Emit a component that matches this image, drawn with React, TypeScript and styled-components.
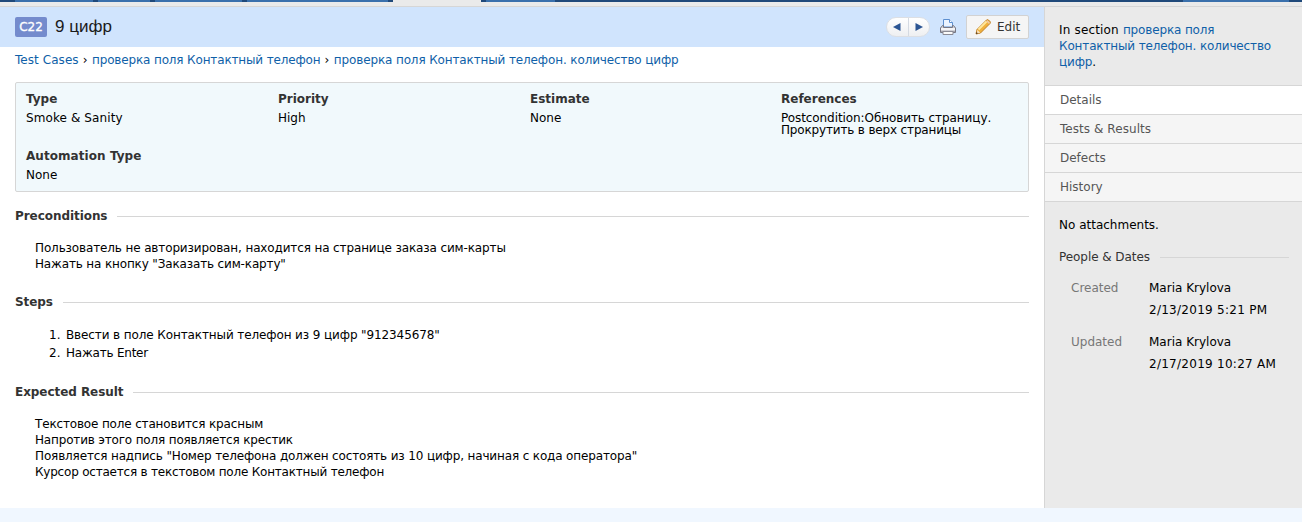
import React from "react";
import styled, { createGlobalStyle } from "styled-components";

const Global = createGlobalStyle`
  * { box-sizing: border-box; }
  body { margin: 0; background: #f0f7ff; color: #000; font: 12px/16px "DejaVu Sans", Verdana, sans-serif; }
  #root { display: flow-root; }
`;

const Page = styled.div`
  height: 522px;
  overflow: hidden;
`;
const TabStrip = styled.div`
  display: flex;
  height: 2px;
  background: #20497a;
`;
const TabEdge = styled.div<{ $w: number; $gap: number; $active?: boolean }>`
  width: ${(p) => p.$w}px;
  margin-left: ${(p) => p.$gap}px;
  background: ${(p) => (p.$active ? "#eaeaea" : "#3a70ac")};
`;
const Rule = styled.div`
  height: 5px;
  background: #eaeaea;
  border-bottom: 1px solid #d6d6d6;
`;
const Body = styled.div`
  display: flex;
  height: 501px;
`;
const Main = styled.main`
  width: 1044px;
  background: #fff;
`;
const Header = styled.header`
  display: flex;
  align-items: center;
  height: 40px;
  padding: 0 15px;
  background: #d0e4fd;
`;
const CaseId = styled.span`
  width: 32px;
  height: 20px;
  border-radius: 2px;
  background: #748bcd;
  color: #fff;
  font-size: 12px;
  line-height: 21px;
  text-align: center;
  -webkit-text-stroke: 0.3px #fff;
`;
const Title = styled.h1`
  flex: 1;
  margin: 0 0 0 8px;
  font: 17px/20px "Liberation Sans", Arial, sans-serif;
  color: #1a1a1a;
`;
const Pager = styled.div`
  display: flex;
  width: 44px;
  height: 20px;
  margin-right: 10px;
  border: 1px solid #dcdfe4;
  border-radius: 10px;
  background: linear-gradient(#fff, #eeeff1);
`;
const PagerButton = styled.span`
  display: flex;
  flex: 1;
  align-items: center;
  justify-content: center;
  & + & { border-left: 1px solid #d5dae2; }
`;
const EditButton = styled.button`
  display: flex;
  align-items: center;
  gap: 6px;
  width: 63px;
  height: 24px;
  margin-left: 10px;
  padding: 0 0 0 8px;
  border: 1px solid #d2d2d2;
  border-radius: 2px;
  background: #f5f5f5;
  color: #333;
  font: inherit;
`;
const Crumbs = styled.nav`
  height: 35px;
  padding: 5px 15px 0;
  white-space: pre;
`;
const Text = styled.span<{ $track?: number }>`
  letter-spacing: ${(p) => p.$track ?? 0}px;
`;
const Link = styled.a<{ $track?: number }>`
  color: #0f5fa8;
  letter-spacing: ${(p) => p.$track ?? 0}px;
`;
const Line = styled.div<{ $track?: number }>`
  white-space: nowrap;
  letter-spacing: ${(p) => p.$track ?? 0}px;
`;
const Content = styled.div`
  padding: 0 15px;
`;
const Fields = styled.section`
  display: grid;
  grid-template-columns: 252px 252px 251px 1fr;
  grid-template-rows: 57px auto;
  height: 110px;
  margin-bottom: 16px;
  padding: 8px 10px 0;
  border: 1px solid #d6d6d6;
  border-radius: 2px;
  background: #f1f9fc;
`;
const FieldName = styled.div`
  height: 20px;
  font-weight: bold;
  color: #333;
`;
const FieldValue = styled.div`
  padding-top: 1px;
  line-height: 12px;
`;
const Section = styled.section<{ $h: number }>`
  height: ${(p) => p.$h}px;
`;
const SectionTitle = styled.h2<{ $light?: boolean }>`
  display: flex;
  align-items: center;
  gap: 10px;
  margin: 0;
  font-size: 12px;
  line-height: 16px;
  font-weight: ${(p) => (p.$light ? "normal" : "bold")};
  letter-spacing: -0.06px;
  color: #333;
  white-space: nowrap;
  &::after { content: ""; flex: 1; margin-top: 1px; border-top: 1px solid #d6d6d6; }
`;
const TextBlock = styled.div`
  padding: 16px 20px 0;
`;
const Steps = styled.ol`
  margin: 0;
  padding: 16px 0 0 34px;
  line-height: 18px;
  list-style: none;
  counter-reset: step;
`;
const Step = styled.li<{ $track: number }>`
  display: flex;
  letter-spacing: ${(p) => p.$track}px;
  counter-increment: step;
  &::before { content: counter(step) "."; width: 17px; letter-spacing: 0; }
`;
const Aside = styled.aside`
  flex: 1;
  border-left: 1px solid #d6d6d6;
  background: #eaeaea;
`;
const SectionInfo = styled.p`
  height: 78px;
  margin: 0;
  padding: 15px 30px 0 14px;
`;
const SideTab = styled.div<{ $active?: boolean }>`
  height: 29px;
  padding: 6px 15px 0;
  border-top: 1px solid #d6d6d6;
  background: ${(p) => (p.$active ? "#fff" : "#f5f5f5")};
  color: #555;
`;
const SideBody = styled.div`
  padding: 15px 13px 0 14px;
  border-top: 1px solid #d6d6d6;
`;
const Attachments = styled.div`
  height: 32px;
`;
const People = styled.dl`
  display: grid;
  grid-template-columns: 78px 1fr;
  row-gap: 10px;
  margin: 12px 0 0;
  padding-left: 12px;
  line-height: 22px;
`;
const Who = styled.dt`
  color: #777;
`;
const When = styled.dd`
  margin: 0;
`;

const tabs = [
  { gap: 15, w: 78 },
  { gap: 5, w: 52 },
  { gap: 5, w: 87 },
  { gap: 5, w: 141 },
  { gap: 5, w: 88, active: true },
  { gap: 5, w: 69 },
  { gap: 628, w: 106 },
];

const Arrow = ({ left }: { left?: boolean }) => (
  <svg width="8" height="8" viewBox="0 0 8 8">
    <path d={left ? "M7.5 0v8L0 4z" : "M.5 0v8L8 4z"} fill="#2b5593" />
  </svg>
);

const PrinterIcon = () => (
  <svg width="16" height="16" viewBox="0 0 16 16">
    <path d="M3.5 8V.5h6l3 3V8z" fill="#eaf3ff" stroke="#5c8fd0" />
    <path d="M9.5.5v3h3" fill="#fff" stroke="#5c8fd0" />
    <path d="M2.500 6.500h1v2h9v-2h1l2 2.500v4.500h-15V9z" fill="#d0d0d6" stroke="#777783" />
    <path d="M1 10h14" stroke="#f4f4f6" strokeWidth="2" />
    <path d="M1 12.500h14" stroke="#a5a5ad" />
    <path d="M3 12.500h10v3H3z" fill="#fafafa" stroke="#8b8b95" />
  </svg>
);

const PencilIcon = () => (
  <svg width="16" height="16" viewBox="0 0 16 16">
    <path d="M1 15l1-4.500L11.500 1q1-.8 2 0l1.500 1.500q.8 1 0 2L5.500 14z" fill="#f0b03c" stroke="#c08128" />
    <path d="M3.500 10.500l8-8" stroke="#ffe79b" strokeWidth="2" />
    <path d="M11 2l3 3 1-1.200-2.500-2.500z" fill="#edc9a8" />
    <path d="M2.200 10.700l3 3-3.200.9z" fill="#f8e2bd" />
    <path d="M1 15l.5-2 1.500 1.500z" fill="#4a3520" />
  </svg>
);

export default function App() {
  return (
    <Page>
      <Global />
      <TabStrip>
        {tabs.map((t, i) => (
          <TabEdge key={i} $w={t.w} $gap={t.gap} $active={t.active} />
        ))}
      </TabStrip>
      <Rule />
      <Body>
        <Main>
          <Header>
            <CaseId>C22</CaseId>
            <Title>9 цифр</Title>
            <Pager>
              <PagerButton><Arrow left /></PagerButton>
              <PagerButton><Arrow /></PagerButton>
            </Pager>
            <PrinterIcon />
            <EditButton><PencilIcon />Edit</EditButton>
          </Header>
          <Crumbs>
            <Link $track={0.06}>Test Cases</Link>
            <Text $track={0.3}> › </Text>
            <Link $track={-0.15}>проверка поля Контактный телефон</Link>
            <Text $track={0.3}> › </Text>
            <Link $track={-0.13}>проверка поля Контактный телефон. количество цифр</Link>
          </Crumbs>
          <Content>
            <Fields>
              <div><FieldName>Type</FieldName><FieldValue><Line $track={0.1}>Smoke &amp; Sanity</Line></FieldValue></div>
              <div><FieldName>Priority</FieldName><FieldValue>High</FieldValue></div>
              <div><FieldName>Estimate</FieldName><FieldValue>None</FieldValue></div>
              <div>
                <FieldName>References</FieldName>
                <FieldValue>
                  <Line $track={-0.08}>Postcondition:Обновить страницу.</Line>
                  <Line $track={-0.16}>Прокрутить в верх страницы</Line>
                </FieldValue>
              </div>
              <div><FieldName><Text $track={0.06}>Automation Type</Text></FieldName><FieldValue>None</FieldValue></div>
            </Fields>
            <Section $h={86}>
              <SectionTitle>Preconditions</SectionTitle>
              <TextBlock>
                <Line $track={-0.13}>Пользователь не авторизирован, находится на странице заказа сим-карты</Line>
                <Line $track={-0.15}>Нажать на кнопку "Заказать сим-карту"</Line>
              </TextBlock>
            </Section>
            <Section $h={90}>
              <SectionTitle>Steps</SectionTitle>
              <Steps>
                <Step $track={-0.11}>Ввести в поле Контактный телефон из 9 цифр "912345678"</Step>
                <Step $track={-0.22}>Нажать Enter</Step>
              </Steps>
            </Section>
            <Section $h={110}>
              <SectionTitle>Expected Result</SectionTitle>
              <TextBlock>
                <Line $track={-0.16}>Текстовое поле становится красным</Line>
                <Line $track={-0.17}>Напротив этого поля появляется крестик</Line>
                <Line $track={-0.145}>Появляется надпись "Номер телефона должен состоять из 10 цифр, начиная с кода оператора"</Line>
                <Line $track={-0.21}>Курсор остается в текстовом поле Контактный телефон</Line>
              </TextBlock>
            </Section>
          </Content>
        </Main>
        <Aside>
          <SectionInfo>
            <Text $track={0.17}>In section </Text>
            <Link $track={-0.14}>проверка поля Контактный телефон. количество цифр</Link>.
          </SectionInfo>
          <SideTab $active>Details</SideTab>
          <SideTab><Text $track={0.06}>Tests &amp; Results</Text></SideTab>
          <SideTab>Defects</SideTab>
          <SideTab>History</SideTab>
          <SideBody>
            <Attachments>No attachments.</Attachments>
            <SectionTitle $light>People &amp; Dates</SectionTitle>
            <People>
              <Who>Created</Who>
              <When>
                <Line>Maria Krylova</Line>
                <Line $track={0.27}>2/13/2019 5:21 PM</Line>
              </When>
              <Who>Updated</Who>
              <When>
                <Line>Maria Krylova</Line>
                <Line $track={0.27}>2/17/2019 10:27 AM</Line>
              </When>
            </People>
          </SideBody>
        </Aside>
      </Body>
    </Page>
  );
}
